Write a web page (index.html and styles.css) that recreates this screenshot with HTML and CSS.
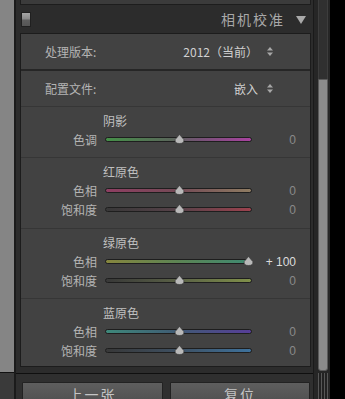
FILE: index.html
```html
<!DOCTYPE html>
<html lang="zh-CN">
<head>
<meta charset="utf-8">
<title>相机校准</title>
<link rel="stylesheet" href="styles.css">
</head>
<body>
<div class="app">
  <div class="side">
    <div class="side-top"></div>
    <div class="side-bottom"></div>
  </div>
  <div class="divider"></div>
  <div class="panel">
    <div class="stub"></div>
    <div class="header">
      <span class="toggle"></span>
      <span class="title">相机校准</span>
      <svg class="caret" width="10" height="8" viewBox="0 0 10 8"><polygon points="0,0 10,0 5,8" fill="#a9a9a9"/></svg>
    </div>
    <div class="section">
      <div class="row row-first">
        <span class="row-label">处理版本:</span>
        <span class="row-value">2012（当前）</span>
        <svg class="updown" width="6" height="9" viewBox="0 0 6 9"><polygon points="0,3.5 3,0 6,3.5" fill="#a8a8a8"/><polygon points="0,5.5 6,5.5 3,9" fill="#a8a8a8"/></svg>
      </div>
      <div class="row">
        <span class="row-label">配置文件:</span>
        <span class="row-value">嵌入</span>
        <svg class="updown" width="6" height="9" viewBox="0 0 6 9"><polygon points="0,3.5 3,0 6,3.5" fill="#a8a8a8"/><polygon points="0,5.5 6,5.5 3,9" fill="#a8a8a8"/></svg>
      </div>

      <div class="group g-shadow">
        <div class="group-title">阴影</div>
        <div class="slider-row">
          <span class="s-label">色调</span>
          <div class="track t-shadow"><svg class="thumb" style="left:68px" width="11" height="10" viewBox="0 0 11 10"><path d="M5.5 0.5 L9.8 5.6 Q10.6 9.5 5.5 9.5 Q0.4 9.5 1.2 5.6 Z"/></svg></div>
          <span class="s-value">0</span>
        </div>
      </div>

      <div class="group g-red">
        <div class="group-title">红原色</div>
        <div class="slider-row">
          <span class="s-label">色相</span>
          <div class="track t-red-hue"><svg class="thumb" style="left:68px" width="11" height="10" viewBox="0 0 11 10"><path d="M5.5 0.5 L9.8 5.6 Q10.6 9.5 5.5 9.5 Q0.4 9.5 1.2 5.6 Z"/></svg></div>
          <span class="s-value">0</span>
        </div>
        <div class="slider-row">
          <span class="s-label">饱和度</span>
          <div class="track t-red-sat"><svg class="thumb" style="left:68px" width="11" height="10" viewBox="0 0 11 10"><path d="M5.5 0.5 L9.8 5.6 Q10.6 9.5 5.5 9.5 Q0.4 9.5 1.2 5.6 Z"/></svg></div>
          <span class="s-value">0</span>
        </div>
      </div>

      <div class="group g-green">
        <div class="group-title">绿原色</div>
        <div class="slider-row">
          <span class="s-label">色相</span>
          <div class="track t-green-hue"><svg class="thumb" style="left:137px" width="11" height="10" viewBox="0 0 11 10"><path d="M5.5 0.5 L9.8 5.6 Q10.6 9.5 5.5 9.5 Q0.4 9.5 1.2 5.6 Z"/></svg></div>
          <span class="s-value s-active">+ 100</span>
        </div>
        <div class="slider-row">
          <span class="s-label">饱和度</span>
          <div class="track t-green-sat"><svg class="thumb" style="left:68px" width="11" height="10" viewBox="0 0 11 10"><path d="M5.5 0.5 L9.8 5.6 Q10.6 9.5 5.5 9.5 Q0.4 9.5 1.2 5.6 Z"/></svg></div>
          <span class="s-value">0</span>
        </div>
      </div>

      <div class="group g-blue">
        <div class="group-title">蓝原色</div>
        <div class="slider-row">
          <span class="s-label">色相</span>
          <div class="track t-blue-hue"><svg class="thumb" style="left:68px" width="11" height="10" viewBox="0 0 11 10"><path d="M5.5 0.5 L9.8 5.6 Q10.6 9.5 5.5 9.5 Q0.4 9.5 1.2 5.6 Z"/></svg></div>
          <span class="s-value">0</span>
        </div>
        <div class="slider-row">
          <span class="s-label">饱和度</span>
          <div class="track t-blue-sat"><svg class="thumb" style="left:68px" width="11" height="10" viewBox="0 0 11 10"><path d="M5.5 0.5 L9.8 5.6 Q10.6 9.5 5.5 9.5 Q0.4 9.5 1.2 5.6 Z"/></svg></div>
          <span class="s-value">0</span>
        </div>
      </div>
    </div>
    <div class="gap-bar"></div>
    <div class="footer">
      <button class="btn btn-prev">上一张</button>
      <button class="btn btn-reset">复位</button>
    </div>
  </div>
  <div class="scroll">
    <div class="scroll-track">
      <div class="scroll-top"></div>
      <div class="scroll-thumb"></div>
      <div class="scroll-grip"></div>
    </div>
  </div>
  <div class="edge"></div>
</div>
</body>
</html>
```
FILE: styles.css
```css
* { box-sizing: border-box; }
html, body {
  margin: 0;
  padding: 0;
  width: 345px;
  height: 399px;
  overflow: hidden;
  background: #000;
  font-family: "Noto Sans CJK SC", "Liberation Sans", sans-serif;
}
.app {
  display: flex;
  height: 399px;
  overflow: hidden;
}
.side {
  width: 14px;
  display: flex;
  flex-direction: column;
}
.side-top {
  height: 373px;
  flex: none;
  background: #858585;
  border-bottom: 1px solid #111;
}
.side-bottom {
  flex: 1;
  background: #3a3a3a;
}
.divider {
  width: 2px;
  background: #1b1b1b;
}
.panel {
  width: 297px;
  height: 399px;
  overflow: hidden;
  background: #2c2c2c;
  display: flex;
  flex-direction: column;
}
.panel > * { flex-shrink: 0; }
.stub {
  height: 5px;
  margin: 0 2px 0 4px;
  background: #3b3b3b;
  border: 1px solid #1d1d1d;
  border-top: none;
}
.header {
  height: 28px;
  margin: 0 2px 0 4px;
  display: flex;
  align-items: center;
  padding: 0 5px 0 1px;
}
.toggle {
  width: 10px;
  height: 15px;
  border: 1px solid #202020;
  background: linear-gradient(#a6a6a6, #8a8a8a 45%, #5e5e5e 55%, #555 100%);
}
.title {
  margin-left: auto;
  margin-right: 11px;
  font-size: 14px;
  letter-spacing: 2px;
  color: #a8a8a8;
  line-height: 18px;
}
.caret { display: block; margin-top: 1px; }
.section {
  margin: 0 2px 0 4px;
  background: #424242;
  border: 1px solid #1c1c1c;
}
.row {
  height: 35px;
  display: flex;
  align-items: center;
  padding: 0 37px 0 24px;
  font-size: 12px;
  color: #b4b4b4;
}
.row-first {
  height: 37px;
  border-bottom: 2px solid #262626;
}
.row-value {
  margin-left: auto;
  color: #d0d0d0;
}
.updown {
  margin-left: 9px;
  display: block;
}
.group {
  border-top: 1px solid #363636;
  padding: 6px 14px 9px 0;
}
.g-shadow { padding-bottom: 8px; }
.g-green { padding-bottom: 8px; }
.g-blue { padding-bottom: 6px; }
.group-title {
  height: 16px;
  line-height: 16px;
  margin-bottom: 1px;
  padding-left: 82px;
  font-size: 12px;
  color: #c0c0c0;
}
.slider-row {
  height: 19px;
  display: flex;
  align-items: center;
  font-size: 12px;
}
.s-label {
  width: 76px;
  text-align: right;
  color: #b4b4b4;
}
.track {
  position: relative;
  margin-left: 8px;
  width: 147px;
  height: 5px;
  border-radius: 3px;
  border: 1px solid #1e1e1e;
}
.thumb {
  position: absolute;
  top: -4px;
  display: block;
}
.thumb path {
  fill: #b9b9b9;
  stroke: #333;
  stroke-width: 0.6;
}
.s-value {
  width: 44px;
  text-align: right;
  color: #8a8a8a;
  font-family: "Liberation Sans", sans-serif;
  font-size: 12px;
}
.s-value.s-active { color: #dcdcdc; }
.t-shadow { background: linear-gradient(90deg, #459048, #5a665a 45%, #765276 65%, #a8429f); }
.t-red-hue { background: linear-gradient(90deg, #8e3e62, #744a56 50%, #8e7c62); }
.t-red-sat { background: linear-gradient(90deg, #383838, #574249 50%, #9c424e); }
.t-green-hue { background: linear-gradient(90deg, #86863e, #5c8454 50%, #3e8a72); }
.t-green-sat { background: linear-gradient(90deg, #383838, #5a6146 50%, #80904a); }
.t-blue-hue { background: linear-gradient(90deg, #3e887a, #405a74 50%, #573e98); }
.t-blue-sat { background: linear-gradient(90deg, #383838, #3e5062 50%, #3e729c); }
.gap-bar {
  height: 6px;
  margin: 0 2px 0 4px;
}
.footer {
  flex: 1 1 auto;
  min-height: 0;
  border-top: 1px solid #0f0f0f;
  background: #2f2f2f;
  display: flex;
  align-items: flex-start;
  gap: 7px;
  padding: 8px 3px 0 6px;
}
.btn {
  height: 24px;
  flex: none;
  border: 1px solid #222;
  border-radius: 1px;
  background: linear-gradient(#5e5e5e, #4e4e4e);
  color: #c4c4c4;
  font-family: "Noto Sans CJK SC", sans-serif;
  font-size: 14px;
  letter-spacing: 2px;
  line-height: 20px;
  padding: 0;
}
.btn-prev { width: 141px; }
.btn-reset { width: 140px; }
.scroll {
  width: 17px;
  background: #262626;
  border-left: 1px solid #1a1a1a;
  padding: 0 2px 0 4px;
}
.scroll-track {
  height: 399px;
  display: flex;
  flex-direction: column;
}
.scroll-top {
  height: 79px;
  flex: none;
  background: #303030;
  border-left: 1px solid #3d3d3d;
  border-right: 1px solid #3d3d3d;
}
.scroll-thumb {
  height: 292px;
  flex: none;
  background: #8b8b8b;
  border: 1px solid #5a5a5a;
  border-radius: 0 0 3px 3px;
}
.scroll-grip {
  flex: 1;
  margin-top: 2px;
  background: repeating-linear-gradient(90deg, #575757 0 1px, #222 1px 3px);
}
.edge {
  flex: 1;
  background: #000;
}
```
